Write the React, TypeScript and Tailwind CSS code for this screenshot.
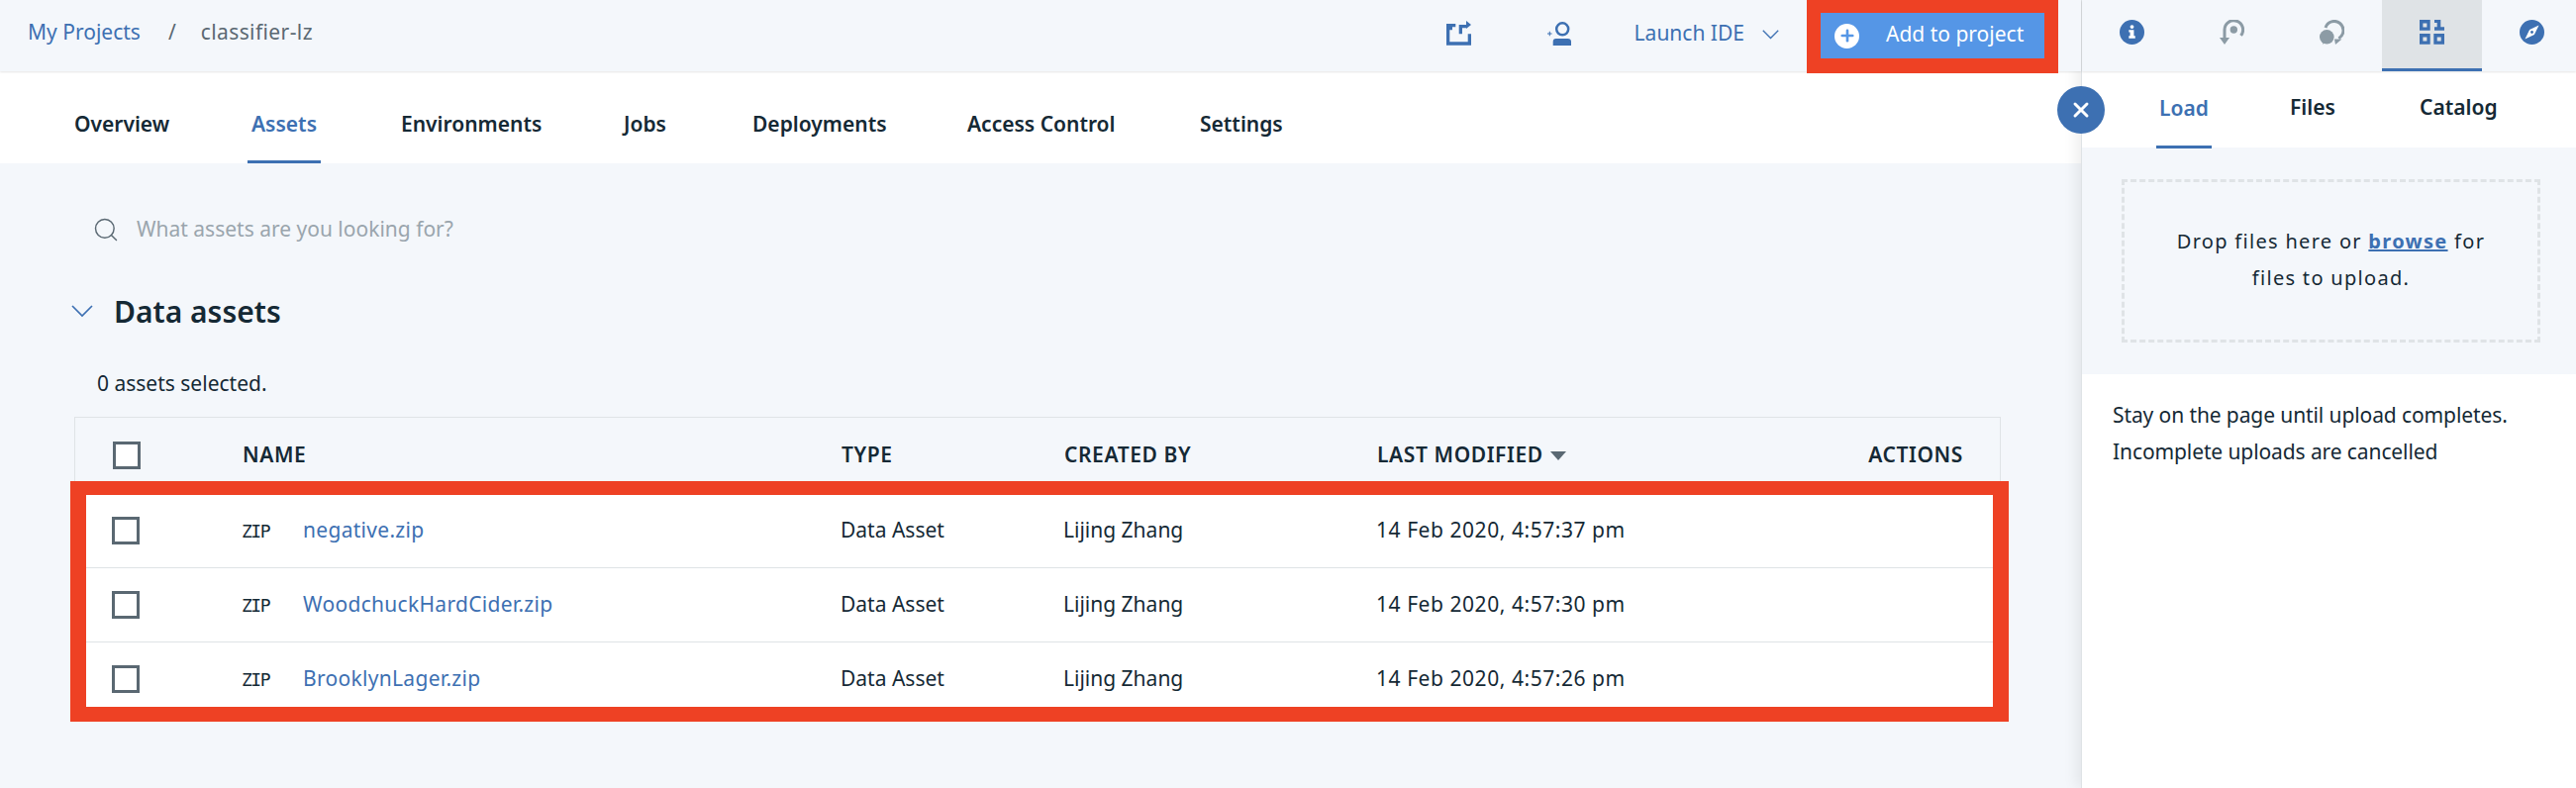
import React from 'react';
import { Search, Plus, X } from 'lucide-react';

const font = { fontFamily: '"Noto Sans", sans-serif' };

const navTabs = [
    { label: 'Overview', width: 'w-[179px]' },
    { label: 'Assets', width: 'w-[151px]' },
    { label: 'Environments', width: 'w-[225px]' },
    { label: 'Jobs', width: 'w-[130px]' },
    { label: 'Deployments', width: 'w-[217px]' },
    { label: 'Access Control', width: 'w-[235px]' },
    { label: 'Settings', width: 'w-[168px]' },
];

const assets = [
    { name: 'negative.zip', modified: '14 Feb 2020, 4:57:37 pm' },
    { name: 'WoodchuckHardCider.zip', modified: '14 Feb 2020, 4:57:30 pm' },
    { name: 'BrooklynLager.zip', modified: '14 Feb 2020, 4:57:26 pm' },
];

const rowGrid = 'grid grid-cols-[131px_605px_225px_316px_1fr_auto] items-center pl-[38px] pr-[37px]';

const Checkbox = () => <div className="h-[28px] w-[28px] border-[3px] border-[#5a6872] bg-white" />;

const Chevron = ({ className }: { className: string }) => (
    <svg viewBox="0 0 22 13" fill="none" stroke="#3d70b2" strokeWidth="1.7" className={className}>
        <path d="M1 1l10 10L21 1" />
    </svg>
);

const ShareIcon = () => (
    <svg width="25" height="25" viewBox="0 0 25 25" fill="#3d70b2">
        <path d="M0 3h9.300v3.300H6v3H3.300v12h18.400V13.300H25V24.700H0z" />
        <path d="M12.700 13.300V4h7.300V0l5 4-5 4V7.300h-4v6z" />
    </svg>
);

const InviteIcon = () => (
    <svg width="24" height="24" viewBox="0 0 24 24" fill="#3d70b2">
        <circle cx="15.200" cy="7.300" r="6" fill="none" stroke="#3d70b2" strokeWidth="2.500" />
        <path d="M5.700 20c0-2 1-3 3-3h12c2 0 3.300 1 3.300 3v4H5.700z" />
        <path d="M0 11.500h1.800V9.700h1v1.800h1.800v1H2.800v1.800h-1v-1.800H0z" />
    </svg>
);

const InfoIcon = () => (
    <svg width="25" height="25" viewBox="0 0 26 26">
        <circle cx="13" cy="13" r="13" fill="#3d70b2" />
        <circle cx="13" cy="7.400" r="2" fill="#fff" />
        <path d="M9.700 10.700H15V17h1.400v2.400H9.700V17H11v-3.900H9.700z" fill="#fff" />
    </svg>
);

const BranchDownIcon = () => (
    <svg width="25" height="25" viewBox="0 0 25 25" fill="none">
        <circle cx="14.300" cy="10" r="3.700" fill="#8c9ba5" />
        <path d="M5 20V10A9.300 9.300 0 1 1 21.500 15.900" stroke="#8c9ba5" strokeWidth="3" />
        <path d="M0 18l5 7 5-7z" fill="#8c9ba5" />
    </svg>
);

const ChatIcon = () => (
    <svg width="25" height="25" viewBox="0 0 25 25" fill="none">
        <circle cx="7.300" cy="17.300" r="7.300" fill="#8c9ba5" />
        <path d="M3 25l1-5h4z" fill="#8c9ba5" />
        <path d="M6 8A9.200 9.200 0 1 1 19.300 18.700" stroke="#8c9ba5" strokeWidth="3" />
        <path d="M15 19.500h7.500L16 25z" fill="#8c9ba5" />
    </svg>
);

const GridIcon = () => (
    <svg width="25" height="25" viewBox="0 0 25 25" fill="#3d70b2" fillRule="evenodd">
        <path d="M0 0h10.700v10.700H0zM3.400 3.400v4h4v-4z" />
        <path d="M0 14h10.700v10.700H0zM3.400 17.400v4h4v-4z" />
        <path d="M14.300 14H25v10.700H14.300zM17.700 17.400v4h4v-4z" />
        <path d="M15 0h6.300v7.300H25v3.400H15V7.300h2.700V3H15z" />
    </svg>
);

const CompassIcon = () => (
    <svg width="25" height="25" viewBox="0 0 26 26">
        <circle cx="13" cy="13" r="13" fill="#3d70b2" />
        <path d="M20.300 5.700l-4.800 9.800-9.800 4.800 4.800-9.800z" fill="#fff" />
        <circle cx="13" cy="13" r="1.500" fill="#3d70b2" />
    </svg>
);

const panelIcons = [
    { key: 'info', icon: <InfoIcon />, active: false },
    { key: 'branch', icon: <BranchDownIcon />, active: false },
    { key: 'chat', icon: <ChatIcon />, active: false },
    { key: 'grid', icon: <GridIcon />, active: true },
    { key: 'compass', icon: <CompassIcon />, active: false },
];

export default function App() {
    return (
        <div className="relative flex h-[796px] w-[2602px] overflow-hidden bg-[#f4f7fb] text-[21px] text-[#152935]" style={font}>
            <main className="w-[2102px] shrink-0">
                <header className="relative z-10 flex h-[72px] items-center bg-[#f4f7fb] pl-[28px] shadow-[0_1px_2px_rgba(0,0,0,0.1)]">
                    <div className="flex items-center pb-[6px]">
                        <a className="text-[#3d70b2]">My Projects</a>
                        <span className="ml-[28px] text-[#5a6872]">/</span>
                        <span className="ml-[25px] tracking-[0.4px] text-[#5a6872]">classifier-lz</span>
                    </div>
                    <div className="ml-auto flex h-[72px] items-start">
                        <div className="mt-[21px] mr-[77px]"><ShareIcon /></div>
                        <div className="mt-[22px] mr-[64px]"><InviteIcon /></div>
                        <div className="mt-[18px] flex items-center text-[#3d70b2]">
                            Launch IDE
                            <Chevron className="mt-[2px] ml-[18px] w-[17px]" />
                        </div>
                        <div className="mr-[23px] ml-[28px] h-[74px] border-x-[14px] border-t-[13px] border-b-[15px] border-[#ee4124]">
                            <button className="flex h-[46px] w-[226px] items-center bg-[#5596e6] pl-[14px] text-white">
                                <span className="flex h-[25px] w-[25px] items-center justify-center rounded-full bg-white">
                                    <Plus size={18} strokeWidth={3.5} className="text-[#5596e6]" />
                                </span>
                                <span className="ml-[27px] pb-[3px]">Add to project</span>
                            </button>
                        </div>
                    </div>
                </header>

                <nav className="flex h-[93px] bg-white pl-[75px]">
                    {navTabs.map((tab) => (
                        <div key={tab.label} className={`${tab.width} h-full`}>
                            <a
                                className={`relative inline-flex h-full items-center pt-[14px] font-semibold ${
                                    tab.label === 'Assets' ? 'text-[#3d70b2]' : 'text-[#152935]'
                                }`}
                            >
                                {tab.label}
                                {tab.label === 'Assets' && (
                                    <span className="absolute -inset-x-[4px] bottom-0 h-[3px] bg-[#3d70b2]" />
                                )}
                            </a>
                        </div>
                    ))}
                </nav>

                <section className="pr-[81px] pl-[75px]">
                    <div className="flex h-[134px] items-center pl-[18px] text-[#9aa5ad]">
                        <Search size={28} strokeWidth={1.25} className="text-[#5a6872]" />
                        <span className="ml-[17px]">What assets are you looking for?</span>
                    </div>

                    <div className="flex h-[30px] items-center">
                        <Chevron className="-ml-[3px] w-[22px]" />
                        <h2 className="ml-[21px] text-[30px] font-semibold">Data assets</h2>
                    </div>

                    <p className="mt-[45px] h-[27px] pl-[23px] leading-[27px] text-[#152935]">0 assets selected.</p>

                    <div className="relative mt-[20px]">
                        <div className={`${rowGrid} h-[77px] border border-b-0 border-[#dfe3e6] font-semibold tracking-[0.6px]`}>
                            <Checkbox />
                            <span>NAME</span>
                            <span>TYPE</span>
                            <span>CREATED BY</span>
                            <span className="flex items-center">
                                LAST MODIFIED
                                <span className="ml-[7px] h-0 w-0 border-x-[8px] border-t-[9px] border-x-transparent border-t-[#5a6872]" />
                            </span>
                            <span className="text-right">ACTIONS</span>
                        </div>
                        {assets.map((asset, i) => (
                            <div key={asset.name} className={`${rowGrid} h-[75px] border-[#dfe3e6] bg-white ${i > 0 ? 'border-t' : ''}`}>
                                <Checkbox />
                                <span className="flex items-center">
                                    <span className="w-[62px] pt-[1px] text-[18px] tracking-[-1.5px] text-[#152935]" style={{ fontFamily: '"DejaVu Sans Mono", monospace' }}>ZIP</span>
                                    <a className="tracking-[0.3px] text-[#3d70b2]">{asset.name}</a>
                                </span>
                                <span>Data Asset</span>
                                <span>Lijing Zhang</span>
                                <span className="tracking-[0.55px]">{asset.modified}</span>
                                <span />
                            </div>
                        ))}
                        {/* annotation frame drawn over the rows */}
                        <div className="pointer-events-none absolute -right-[8px] -bottom-[6px] -left-[4px] h-[243px] border-x-[16px] border-t-[14px] border-b-[15px] border-[#ee4124]" />
                    </div>
                </section>
            </main>

            <aside className="relative z-[5] w-[500px] shrink-0 border-l border-[#dfe3e6] bg-white shadow-[-4px_0_14px_rgba(0,0,0,0.08)]">
                <div className="flex h-[72px] overflow-hidden bg-[#f4f7fb] shadow-[0_1px_2px_rgba(0,0,0,0.1)]">
                    {panelIcons.map((item) => (
                        <div
                            key={item.key}
                            className={`flex w-[101px] shrink-0 items-start justify-center pt-[20px] ${
                                item.active ? 'border-b-[3px] border-[#3d70b2] bg-[#dfe3e6]' : ''
                            }`}
                        >
                            {item.icon}
                        </div>
                    ))}
                </div>

                <div className="flex h-[77px] pl-[75px] font-semibold">
                    <a className="relative flex h-[78px] w-[135px] items-center pb-[3px] pl-[3px] text-[#3d70b2]">
                        Load
                        <span className="absolute bottom-0 left-0 h-[3px] w-[56px] bg-[#3d70b2]" />
                    </a>
                    <a className="flex w-[131px] items-center pb-[3px]">Files</a>
                    <a className="flex items-center pb-[3px]">Catalog</a>
                </div>

                <div className="h-[229px] bg-[#f4f7fb] pt-[32px] pl-[40px]">
                    <div className="flex h-[165px] w-[423px] items-center justify-center border-[3px] border-dashed border-[#dfe3e6] pb-[4px] text-center text-[20px] leading-[37px] tracking-[1.3px]">
                        <p>
                            Drop files here or{' '}
                            <a className="font-bold text-[#3d70b2] underline">browse</a> for
                            <br />
                            files to upload.
                        </p>
                    </div>
                </div>

                <p className="mt-[23px] pl-[31px] leading-[37px] tracking-[-0.1px]">
                    Stay on the page until upload completes.
                    <br />
                    Incomplete uploads are cancelled
                </p>
            </aside>

            {/* close button straddles the panel edge */}
            <button className="absolute top-[87px] left-[2078px] z-20 flex h-[48px] w-[48px] items-center justify-center rounded-full bg-[#3d70b2] text-white">
                <X size={24} strokeWidth={3} />
            </button>
        </div>
    );
}
